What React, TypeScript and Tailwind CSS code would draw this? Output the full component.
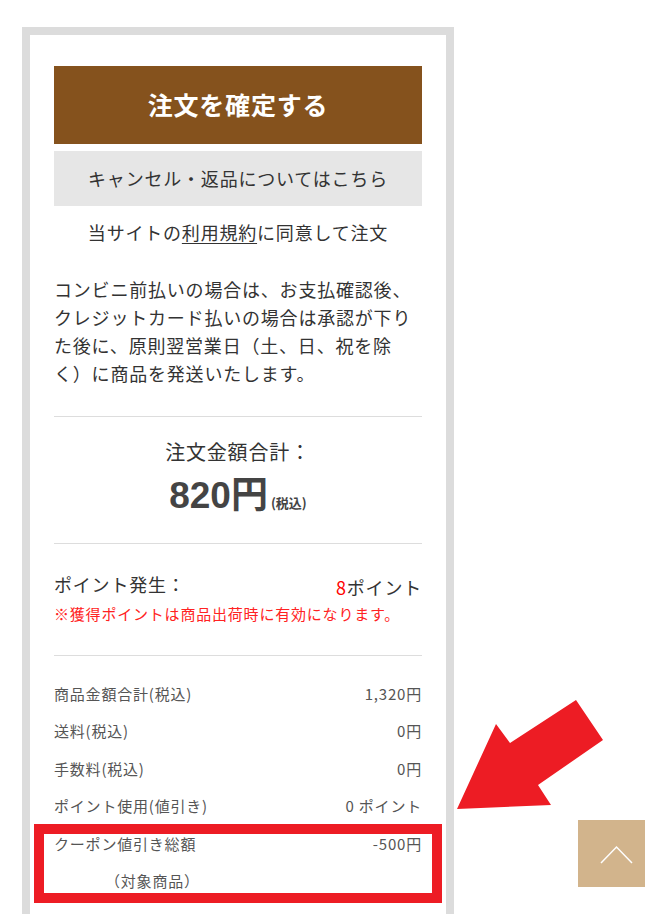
/** Order confirmation summary */

const rows = [
  { label: '商品金額合計(税込)', value: '1,320円' },
  { label: '送料(税込)', value: '0円' },
  { label: '手数料(税込)', value: '0円' },
  { label: 'ポイント使用(値引き)', value: '0 ポイント' },
];

export default function App() {
  return (
    <div
      className="relative min-h-[914px] bg-white pl-[22px] pt-[27px] text-[#333] tracking-[0.05em]"
      style={{ fontFamily: '"Noto Sans CJK JP", "Liberation Sans", sans-serif' }}
    >
      <div className="w-[432px] border-8 border-b-0 border-[#dcdcdc] px-[24px] pt-[31px] pb-[40px]">
        <button className="flex h-[78px] w-full items-center justify-center bg-[#85521d] text-[25px] font-bold text-white">
          注文を確定する
        </button>
        <div className="mt-[7px] flex h-[55px] items-center justify-center bg-[#e6e6e6] text-[18px] text-[#333]">
          キャンセル・返品についてはこちら
        </div>
        <p className="mt-[12px] text-center text-[18px] leading-[29px]">
          当サイトの<span className="underline underline-offset-[3px]">利用規約</span>に同意して注文
        </p>
        <p className="mt-[28px] text-[18px] leading-[28px]">
          コンビニ前払いの場合は、お支払確認後、
          <br />
          クレジットカード払いの場合は承認が下り
          <br />
          た後に、原則翌営業日（土、日、祝を除
          <br />
          く）に商品を発送いたします。
        </p>

        <div className="mt-[29px] border-t border-[#ddd]" />

        <div className="pt-[20px] pb-[26px] text-center">
          <div className="text-[20px] leading-[30px]">注文金額合計：</div>
          <div className="mt-[8px] flex items-baseline justify-center text-[#444]">
            <span
              className="text-[37px] font-bold leading-[42px] tracking-normal"
              style={{ fontFamily: '"Liberation Sans", "Noto Sans CJK JP", sans-serif' }}
            >
              820円
            </span>
            <span className="ml-[3px] text-[13px] font-bold tracking-normal">(税込)</span>
          </div>
        </div>

        <div className="border-t border-[#ddd]" />

        <div className="pt-[26px] pb-[28px]">
          <div className="flex items-end justify-between text-[18px] leading-[28px]">
            <span>ポイント発生：</span>
            <span className="translate-y-[3px]">
              <span className="text-[#f00]">8</span>ポイント
            </span>
          </div>
          <div className="mt-[3px] text-[15px] leading-[26px] text-[#f22]">
            ※獲得ポイントは商品出荷時に有効になります。
          </div>
        </div>

        <div className="border-t border-[#ddd]" />

        <div className="pt-[19px] text-[15px] text-[#555]">
          {rows.map((r) => (
            <div key={r.label} className="flex h-[37.5px] items-center justify-between">
              <span>{r.label}</span>
              <span>{r.value}</span>
            </div>
          ))}
          <div className="flex h-[38px] items-center justify-between">
            <span>クーポン値引き総額</span>
            <span>-500円</span>
          </div>
          <div className="flex h-[37px] items-center pl-[51px]">（対象商品）</div>
        </div>
      </div>

      {/* highlight annotation */}
      <div className="absolute left-[34px] top-[824px] h-[79px] w-[408px] border-10 border-[#ed1c24]" />
      <svg className="absolute left-[450px] top-[695px]" width="160" height="120" viewBox="0 0 160 120">
        <polygon points="7,114 46,29 60,48 126,5 153,45 88,90 101,110" fill="#ed1c24" />
      </svg>

      {/* back to top */}
      <div className="absolute left-[578px] top-[820px] h-[67px] w-[67px] bg-[#d2b48c]">
        <svg width="67" height="67" viewBox="0 0 67 67">
          <polyline points="23,43 38.5,27 54,43" fill="none" stroke="#fff" strokeWidth="1.5" />
        </svg>
      </div>
    </div>
  );
}
